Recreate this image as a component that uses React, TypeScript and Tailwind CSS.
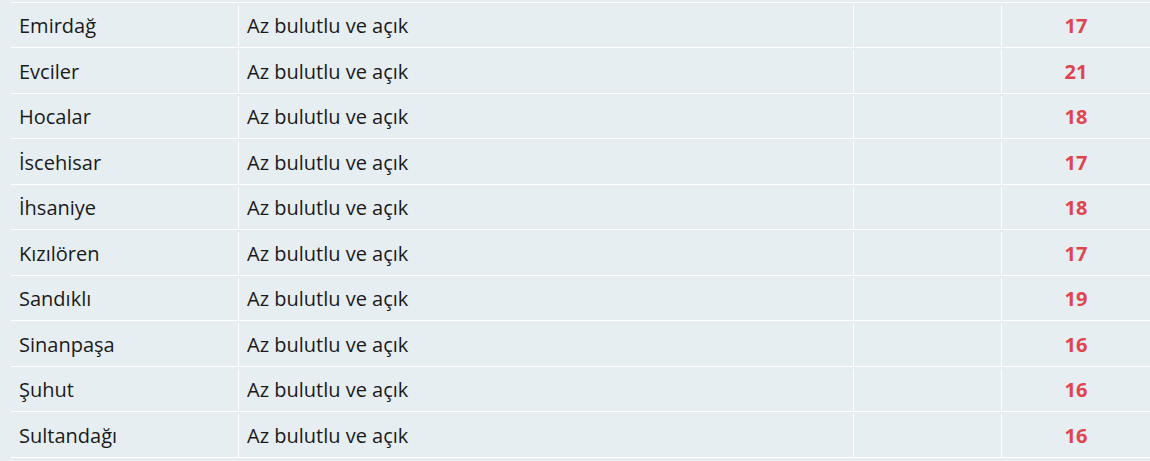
const rows: [string, string, number][] = [
  ['Emirdağ', 'Az bulutlu ve açık', 17],
  ['Evciler', 'Az bulutlu ve açık', 21],
  ['Hocalar', 'Az bulutlu ve açık', 18],
  ['İscehisar', 'Az bulutlu ve açık', 17],
  ['İhsaniye', 'Az bulutlu ve açık', 18],
  ['Kızılören', 'Az bulutlu ve açık', 17],
  ['Sandıklı', 'Az bulutlu ve açık', 19],
  ['Sinanpaşa', 'Az bulutlu ve açık', 16],
  ['Şuhut', 'Az bulutlu ve açık', 16],
  ['Sultandağı', 'Az bulutlu ve açık', 16],
];

export default function App() {
  return (
    <div
      className="h-[461px] w-[1150px] overflow-hidden bg-[#e7eef1] pl-[11px] pt-[2px] text-[20px] text-[#1a1a1a]"
      style={{ fontFamily: '"Open Sans", "Noto Sans", sans-serif' }}
    >
      <div className="border-b border-white">
        {rows.map(([town, sky, temp], i) => (
          <div
            key={town}
            className={`grid grid-cols-[228px_615px_148px_148px] border-t border-white pt-[2px] ${
              i % 2 === 0 ? 'h-[45px]' : 'h-[46px]'
            }`}
          >
            <div className="flex items-center border-r border-white pl-2">{town}</div>
            <div className="flex items-center border-r border-white pl-[8px]">{sky}</div>
            <div className="border-r border-white" />
            <div className="flex items-center justify-center font-bold text-[#e0454d]">{temp}</div>
          </div>
        ))}
      </div>
    </div>
  );
}
